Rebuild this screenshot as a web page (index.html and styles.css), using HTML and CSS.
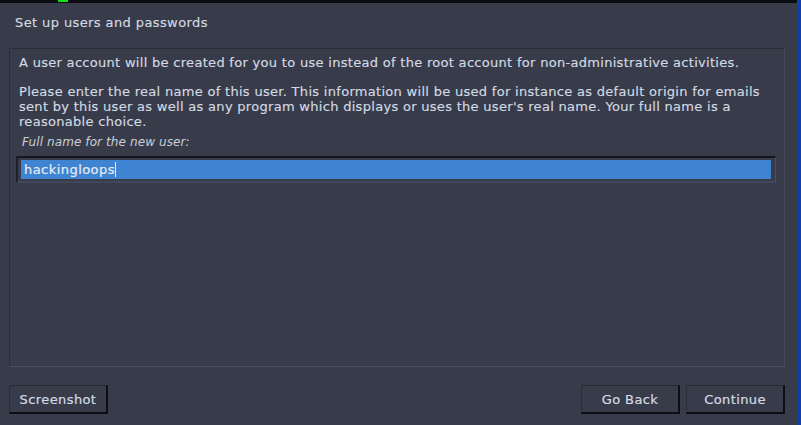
FILE: index.html
```html
<!DOCTYPE html>
<html>
<head>
<meta charset="utf-8">
<link rel="stylesheet" href="styles.css">
</head>
<body>
<div class="screen">
  <div class="window">
    <div class="topbar"><span class="led"></span></div>
    <div class="title">Set up users and passwords</div>
    <div class="panel">
      <p class="para">A user account will be created for you to use instead of the root account for non-administrative activities.</p>
      <p class="para">Please enter the real name of this user. This information will be used for instance as default origin for emails sent by this user as well as any program which displays or uses the user's real name. Your full name is a reasonable choice.</p>
      <div class="label">Full name for the new user:</div>
      <div class="entry"><span class="sel">hackingloops</span></div>
    </div>
    <div class="buttons">
      <button class="btn">Screenshot</button>
      <div class="spacer"></div>
      <button class="btn">Go Back</button>
      <button class="btn">Continue</button>
    </div>
  </div>
  <div class="edge"></div>
</div>
</body>
</html>
```
FILE: styles.css
```css
html, body {
  margin: 0;
  padding: 0;
  background: #383c4a;
}
.screen {
  display: flex;
  width: 801px;
  height: 425px;
  overflow: hidden;
  font-family: "DejaVu Sans", sans-serif;
  font-size: 13px;
  color: #d3dae3;
  letter-spacing: 0.3px;
  -webkit-text-stroke: 0.15px #d3dae3;
}
.window {
  width: 797px;
  display: flex;
  flex-direction: column;
  background: #383c4a;
}
.edge {
  width: 4px;
  background: #0d40a8;
}
.topbar {
  height: 3px;
  background: #0c0d10;
  display: flex;
  padding-left: 58px;
}
.led {
  width: 10px;
  height: 2px;
  background: #13e013;
}
.title {
  padding: 12px 0 0 15px;
  height: 45px;
  line-height: 15px;
  box-sizing: border-box;
  letter-spacing: 0.4px;
}
.panel {
  margin: 0 12px 0 9px;
  height: 319px;
  box-sizing: border-box;
  border: 1px solid #2b2e39;
  border-right-color: #434859;
  border-bottom-color: #465066;
  padding: 6px 8px 0 6px;
}
.para {
  margin: 0 0 14px 3px;
  line-height: 15px;
}
.label {
  margin: -8px 0 0 6px;
  font-style: italic;
  font-size: 12px;
  line-height: 15px;
  letter-spacing: 0.1px;
  color: #c8ced7;
  -webkit-text-stroke: 0;
}
.entry {
  margin-top: 6px;
  height: 27px;
  box-sizing: border-box;
  border-top: 2px solid #15171c;
  border-left: 2px solid #1e2028;
  border-right: 1px solid #4a4f5f;
  border-bottom: 2px solid #41465a;
  padding: 2px 4px 2px 3px;
  display: flex;
  background: #383c4a;
}
.sel {
  flex: 1;
  background: #3f83d3;
  color: #e8ecf2;
  -webkit-text-stroke: 0.2px #e8ecf2;
  letter-spacing: 0.45px;
  line-height: 19px;
  padding-left: 3px;
  display: flex;
  align-items: center;
}
.sel::after {
  content: "";
  width: 1px;
  height: 15px;
  background: #e8ecf2;
}
.buttons {
  display: flex;
  padding: 18px 12px 0 9px;
  gap: 6px;
}
.spacer { flex: 1; }
.btn {
  width: 99px;
  height: 29px;
  box-sizing: border-box;
  background: #383c4a;
  color: #d3dae3;
  font-family: "DejaVu Sans", sans-serif;
  font-size: 13px;
  letter-spacing: 0.4px;
  -webkit-text-stroke: 0.2px #d3dae3;
  border: 1px solid #2d3140;
  border-right: 2px solid #0d0e12;
  border-bottom: 2px solid #0d0e12;
  border-top-color: #262934;
  border-left-color: #2a2e3a;
  padding: 0;
}
```
